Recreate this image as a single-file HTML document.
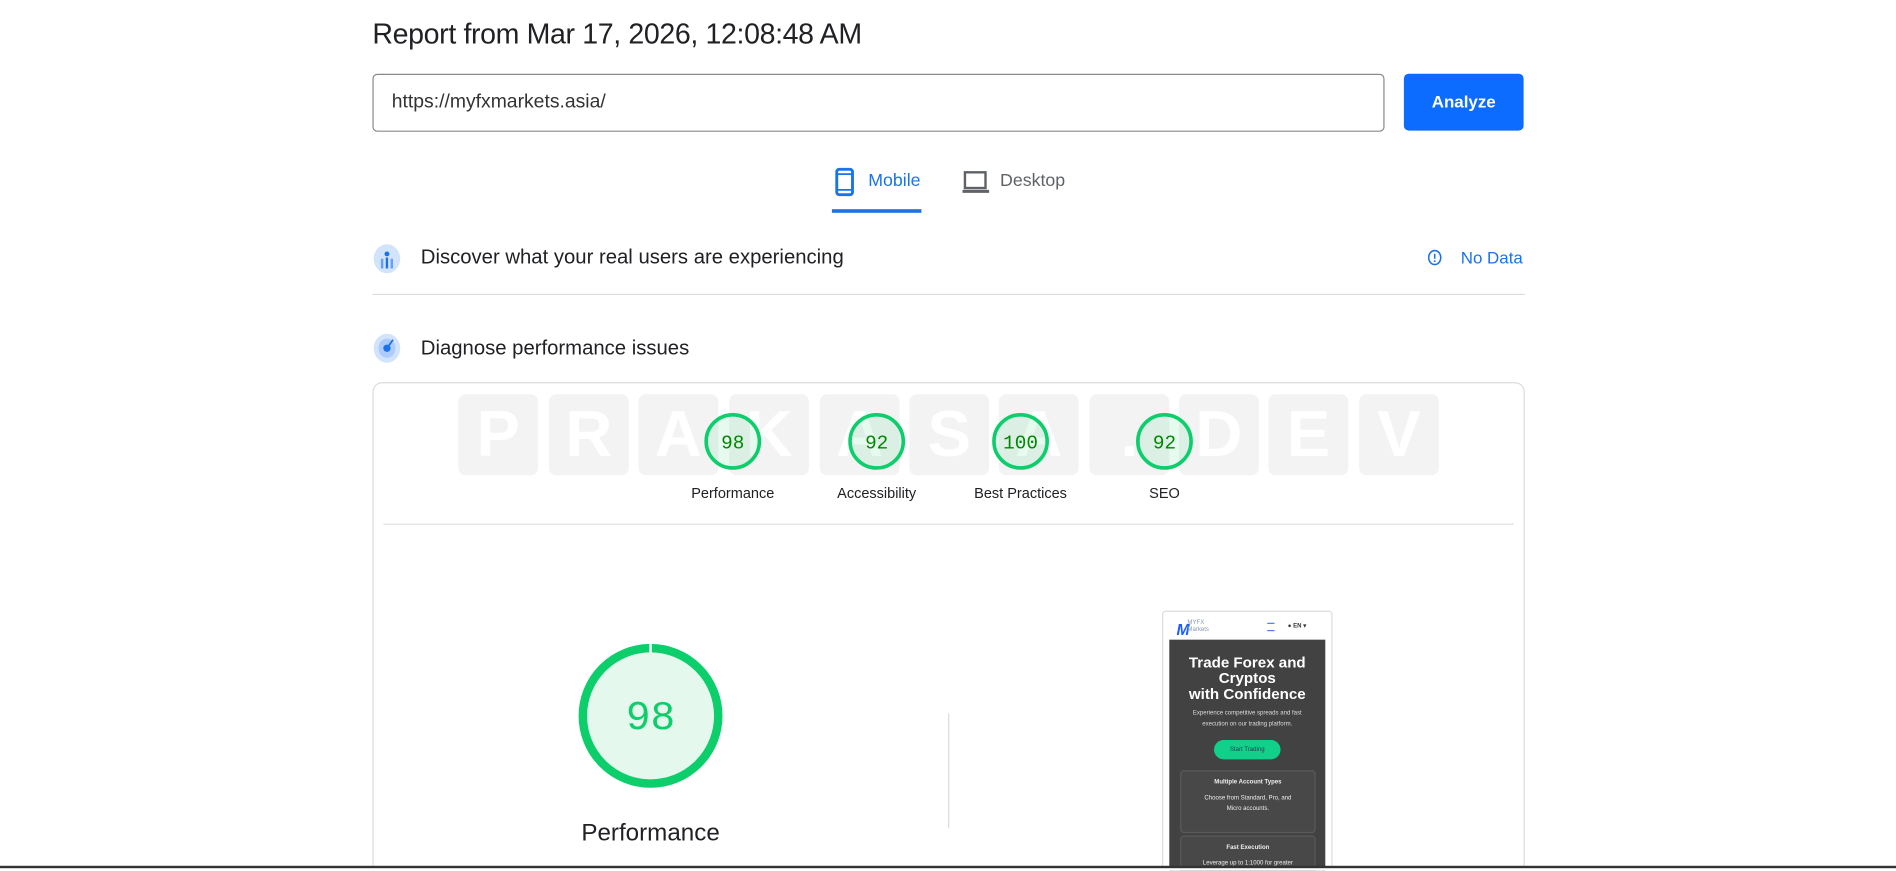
<!DOCTYPE html>
<html><head><meta charset="utf-8"><style>
html,body{margin:0;padding:0;background:#fff;overflow:hidden;width:1896px;height:871px}
#w{position:absolute;left:0;top:0;width:1568px;height:720px;overflow:hidden;transform:scale(1.2092);transform-origin:0 0;font-family:"Liberation Sans",sans-serif;color:#202124}
.a{position:absolute}
.tile{position:absolute;top:326px;width:66px;height:67px;background:#f3f3f3;border-radius:6px;color:#fff;font-weight:bold;font-size:54px;text-align:center;line-height:67px}
.gl{position:absolute;top:401px;width:120px;text-align:center;font-size:12px;color:#202124}
</style></head><body><div id="w">
<div class="a" style="left:308px;top:16px;font-size:23.6px;letter-spacing:-0.3px">Report from Mar 17, 2026, 12:08:48 AM</div>
<div class="a" style="left:308px;top:61px;width:835px;height:46px;border:1px solid #8a8a8a;border-radius:4px"></div>
<div class="a" style="left:324px;top:76px;font-size:16px;color:#333">https://myfxmarkets.asia/</div>
<div class="a" style="left:1161px;top:61px;width:99px;height:47px;background:#0b6cff;border-radius:4px;color:#fff;font-weight:bold;font-size:14px;text-align:center;line-height:47px">Analyze</div>
<svg class="a" style="left:690px;top:138px" width="18" height="26" viewBox="0 0 18 26"><rect x="2" y="2" width="13" height="21" rx="2" fill="none" stroke="#1a73e8" stroke-width="2.4"/><line x1="2" y1="6" x2="15" y2="6" stroke="#1a73e8" stroke-width="1.5"/><line x1="2" y1="19" x2="15" y2="19" stroke="#1a73e8" stroke-width="1.5"/></svg>
<div class="a" style="left:718px;top:142px;font-size:14.7px;color:#1a73e8">Mobile</div>
<div class="a" style="left:688px;top:173px;width:74px;height:3px;background:#1a73e8"></div>
<svg class="a" style="left:795px;top:141px" width="24" height="20" viewBox="0 0 24 20"><rect x="3" y="1.5" width="17" height="13" fill="none" stroke="#5f6368" stroke-width="2"/><rect x="1" y="16" width="22" height="2.5" fill="#5f6368"/></svg>
<div class="a" style="left:827px;top:142px;font-size:14.7px;color:#5f6368">Desktop</div>
<svg class="a" style="left:308px;top:201px" width="24" height="26" viewBox="0 0 24 26"><ellipse cx="12" cy="13" rx="11" ry="12" fill="#d2e3fc"/><circle cx="12" cy="9" r="2" fill="#1a73e8"/><rect x="7" y="13" width="2" height="8" fill="#669df6"/><rect x="11" y="12" width="2" height="9" fill="#1a73e8"/><rect x="15" y="13" width="2" height="8" fill="#669df6"/></svg>
<div class="a" style="left:348px;top:203px;font-size:16.8px">Discover what your real users are experiencing</div>
<svg class="a" style="left:1180px;top:206px" width="13" height="14" viewBox="0 0 13 14"><ellipse cx="6.5" cy="7" rx="5" ry="5.8" fill="none" stroke="#1a73e8" stroke-width="1.3"/><line x1="6.5" y1="3.8" x2="6.5" y2="8" stroke="#1a73e8" stroke-width="1.3"/><circle cx="6.5" cy="10" r=".8" fill="#1a73e8"/></svg>
<div class="a" style="left:1208px;top:205px;font-size:14px;color:#1a73e8">No Data</div>
<div class="a" style="left:308px;top:243px;width:953px;height:1px;background:#dadce0"></div>
<svg class="a" style="left:308px;top:275px" width="24" height="26" viewBox="0 0 24 26"><ellipse cx="12" cy="13" rx="11" ry="12" fill="#d2e3fc"/><ellipse cx="12" cy="13" rx="7" ry="8" fill="#aecbfa"/><circle cx="12" cy="13" r="3" fill="#1a73e8"/><path d="M12 13 L17 6" stroke="#1a73e8" stroke-width="1.5"/></svg>
<div class="a" style="left:348px;top:278px;font-size:16.8px">Diagnose performance issues</div>
<div class="a" style="left:308px;top:316px;width:951px;height:420px;border:1px solid #dadce0;border-radius:8px"></div>
<div class="tile" style="left:379px">P</div><div class="tile" style="left:454px">R</div><div class="tile" style="left:528px">A</div><div class="tile" style="left:603px">K</div><div class="tile" style="left:678px">A</div><div class="tile" style="left:752px">S</div><div class="tile" style="left:826px">A</div><div class="tile" style="left:901px">.</div><div class="tile" style="left:975px">D</div><div class="tile" style="left:1049px">E</div><div class="tile" style="left:1124px">V</div>
<svg class="a" style="left:560px;top:338px" width="450" height="56" viewBox="0 0 450 56" font-family="Liberation Mono,monospace">
<g transform="translate(46,27)"><circle r="22" fill="rgba(12,206,107,0.1)" stroke="#0cce6b" stroke-width="3"/><text y="6" text-anchor="middle" font-size="16" fill="#008800">98</text></g>
<g transform="translate(165,27)"><circle r="22" fill="rgba(12,206,107,0.1)" stroke="#0cce6b" stroke-width="3"/><text y="6" text-anchor="middle" font-size="16" fill="#008800">92</text></g>
<g transform="translate(284,27)"><circle r="22" fill="rgba(12,206,107,0.1)" stroke="#0cce6b" stroke-width="3"/><text y="6" text-anchor="middle" font-size="16" fill="#008800">100</text></g>
<g transform="translate(403,27)"><circle r="22" fill="rgba(12,206,107,0.1)" stroke="#0cce6b" stroke-width="3"/><text y="6" text-anchor="middle" font-size="16" fill="#008800">92</text></g>
</svg>
<div class="gl" style="left:546px">Performance</div><div class="gl" style="left:665px">Accessibility</div><div class="gl" style="left:784px">Best Practices</div><div class="gl" style="left:903px">SEO</div>
<div class="a" style="left:317px;top:433px;width:935px;height:1px;background:#e0e0e0"></div>
<svg class="a" style="left:476px;top:530px" width="124" height="124" viewBox="0 0 124 124"><circle cx="62" cy="62" r="56" fill="#e5f8ed" stroke="#0cce6b" stroke-width="7"/><line x1="62" y1="2" x2="62" y2="10" stroke="#fff" stroke-width="2"/><text x="62" y="73" text-anchor="middle" font-family="Liberation Mono,monospace" font-size="34" fill="#0cce6b">98</text></svg>
<div class="a" style="left:438px;top:678px;width:200px;text-align:center;font-size:20px">Performance</div>
<div class="a" style="left:784px;top:590px;width:1px;height:95px;background:#dadce0"></div>
<div class="a" style="left:961px;top:505px;width:139px;height:220px;border:1px solid #ddd;border-radius:3px;background:#fff;overflow:hidden">
 <div class="a" style="left:11px;top:7px;font-size:13px;font-weight:bold;color:#1a5cff;font-style:italic">M</div>
 <div class="a" style="left:20px;top:6px;font-size:5px;color:#8a9ab8;line-height:6px">MYFX<br>Markets</div>
 <div class="a" style="left:86px;top:9px;width:6px;height:5px;border-top:1px solid #4a7fe8;border-bottom:1px solid #4a7fe8"></div>
 <div class="a" style="left:103px;top:9px;font-size:5px;color:#333;font-weight:bold">● EN ▾</div>
 <div class="a" style="left:5px;top:23px;width:129px;height:200px;background:#424242">
  <div class="a" style="left:0;top:13px;width:129px;text-align:center;color:#fff;font-weight:bold;font-size:12.5px;line-height:13px">Trade Forex and<br>Cryptos<br>with Confidence</div>
  <div class="a" style="left:0;top:57px;width:129px;text-align:center;color:#ddd;font-size:5px;line-height:9px">Experience competitive spreads and fast<br>execution on our trading platform.</div>
  <div class="a" style="left:37px;top:83px;width:55px;height:16px;border-radius:8px;background:#10d08a;color:#245;font-size:5px;line-height:16px;text-align:center">Start Trading</div>
  <div class="a" style="left:9px;top:108px;width:110px;height:50px;border:1px solid #5a5a5a;border-radius:3px;background:#484848;color:#eee;font-size:5px;text-align:center;line-height:9px"><div style="margin-top:5px;font-weight:bold">Multiple Account Types</div><div style="margin-top:4px">Choose from Standard, Pro, and<br>Micro accounts.</div></div>
  <div class="a" style="left:9px;top:162px;width:110px;height:50px;border:1px solid #5a5a5a;border-radius:3px;background:#484848;color:#eee;font-size:5px;text-align:center;line-height:9px"><div style="margin-top:5px;font-weight:bold">Fast Execution</div><div style="margin-top:4px">Leverage up to 1:1000 for greater</div></div>
 </div>
</div>
<div class="a" style="left:0;top:717px;width:1568px;height:3px;background:#fff"></div>
<div class="a" style="left:0;top:716px;width:1568px;height:1.5px;background:#333"></div>
</div></body></html>
